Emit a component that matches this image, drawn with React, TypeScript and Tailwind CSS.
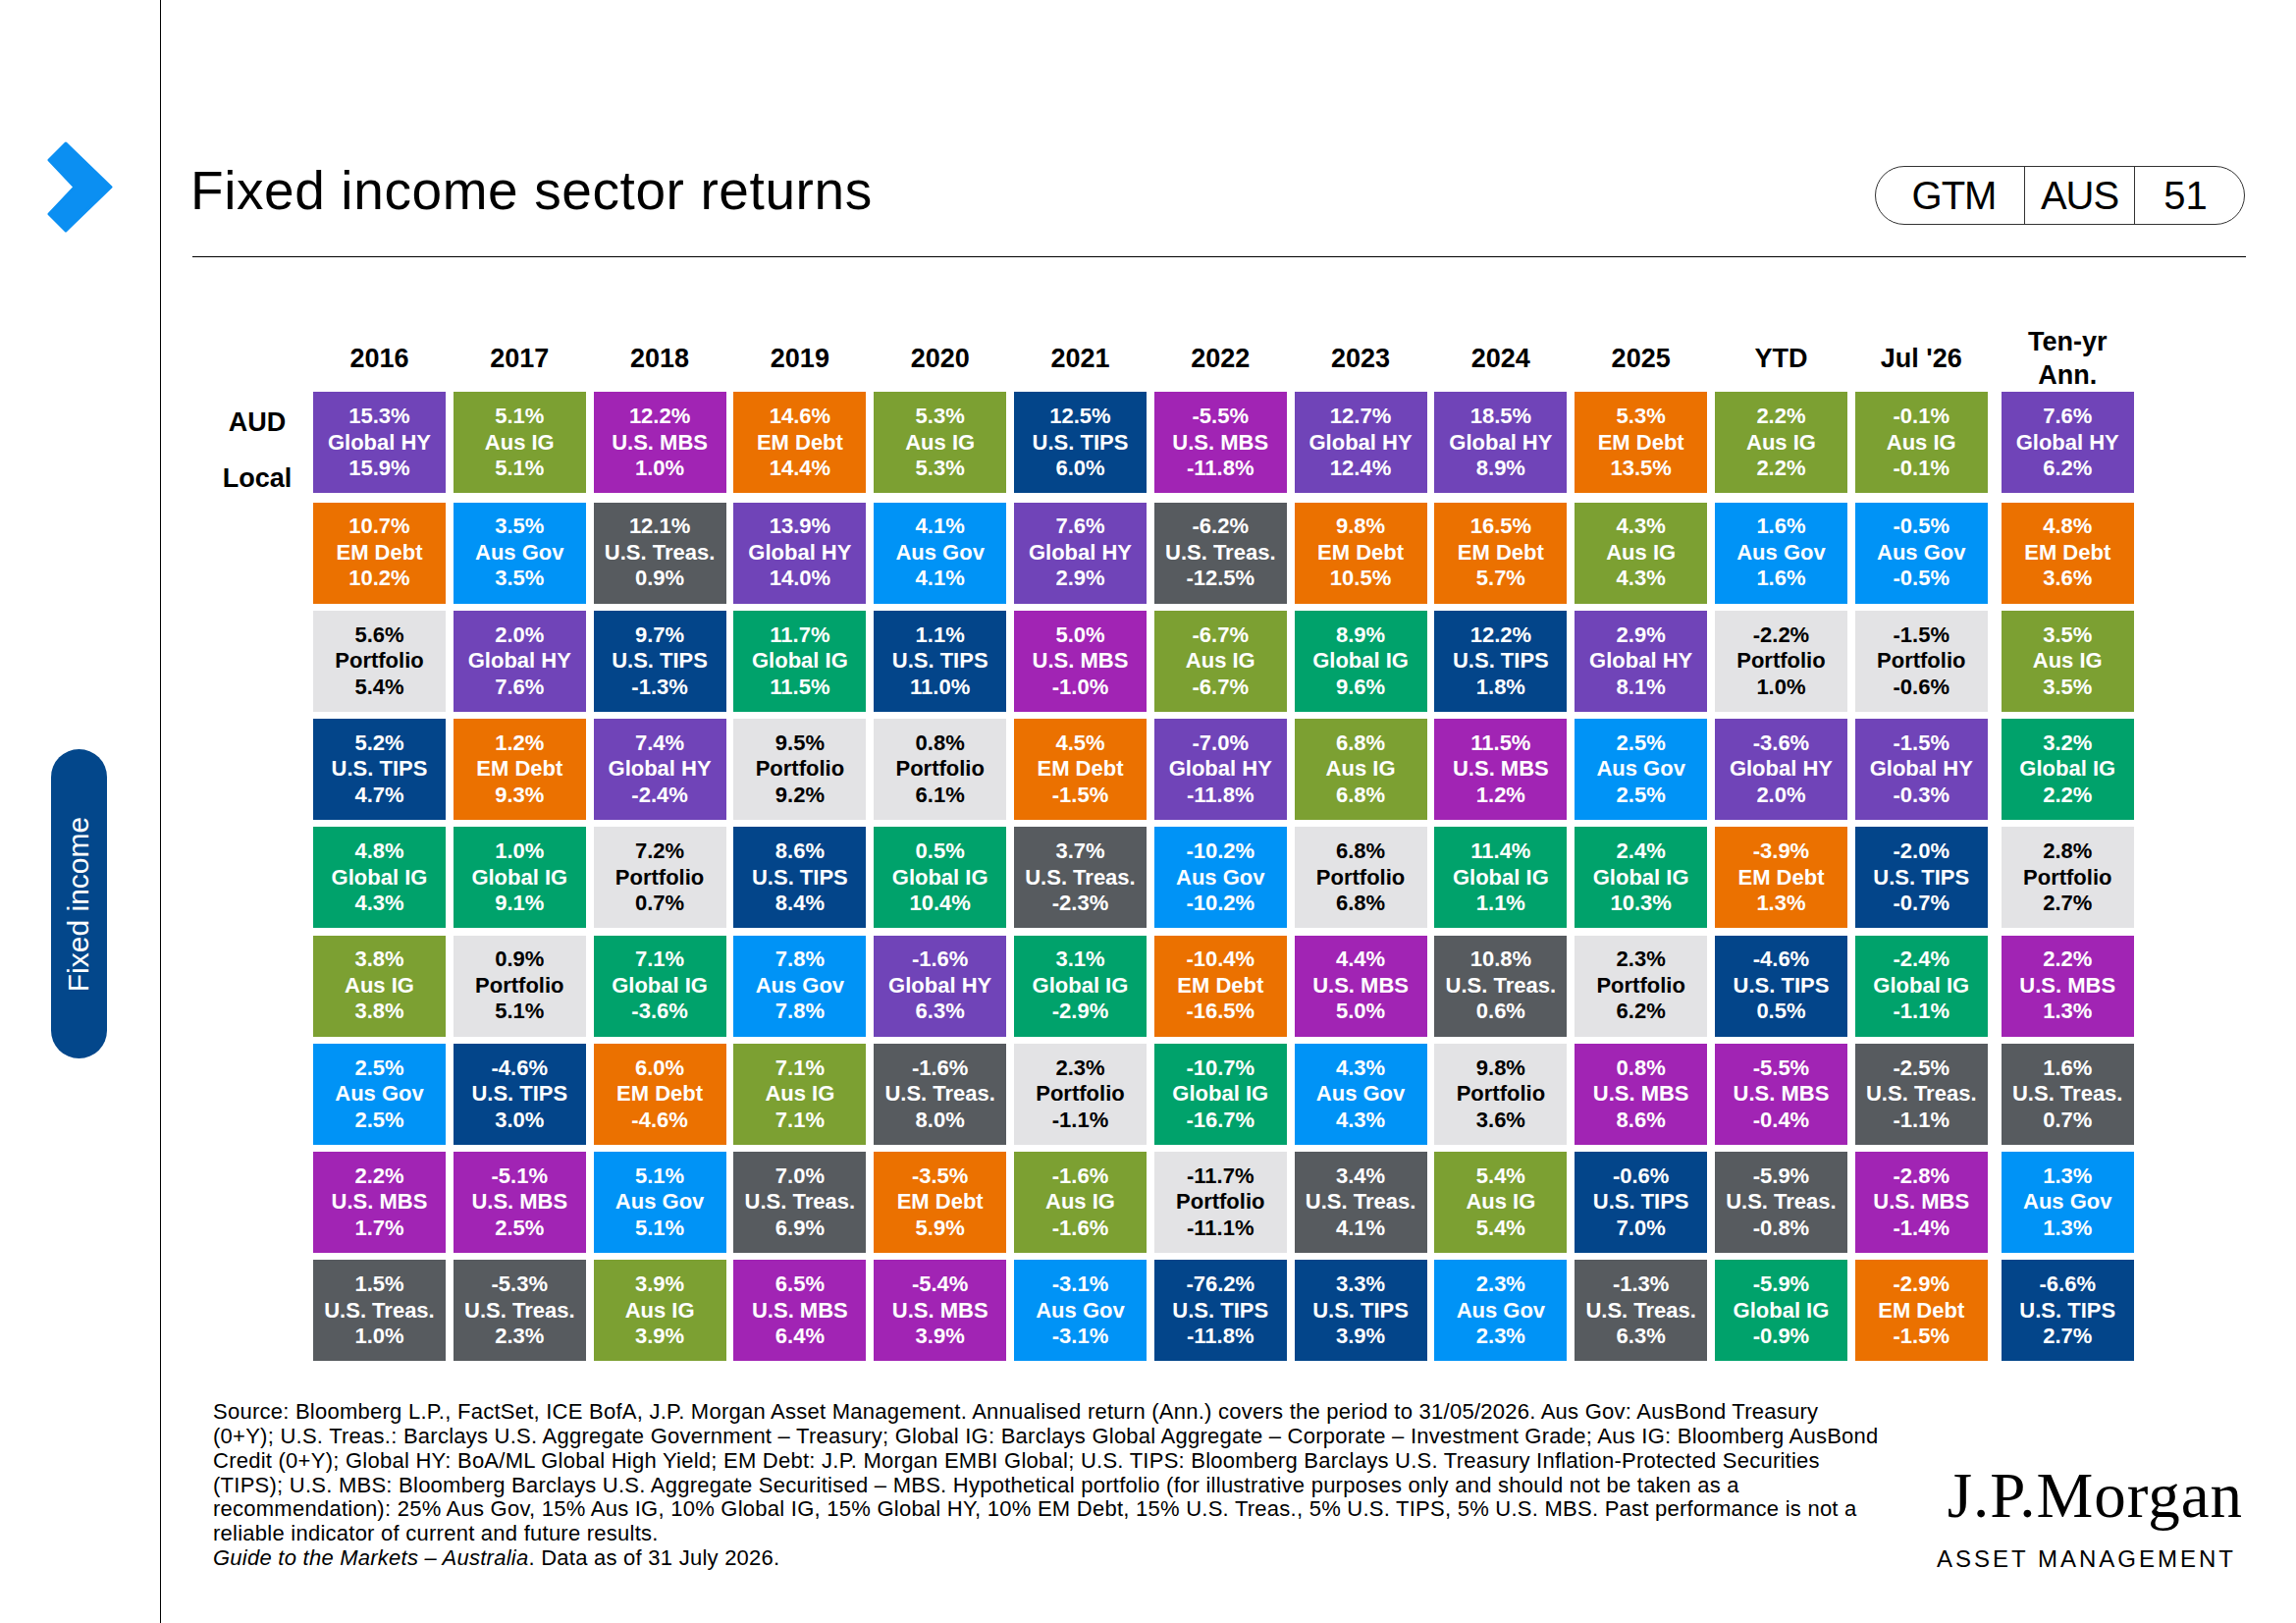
import React from 'react'

const HEADERS = ['2016', '2017', '2018', '2019', '2020', '2021', '2022', '2023', '2024', '2025', 'YTD', "Jul '26"]

const SECTOR_BG: Record<string, string> = {
  'Global HY': 'bg-[#7044b8] text-white',
  'Aus IG': 'bg-[#7ca032] text-white',
  'U.S. MBS': 'bg-[#a124b4] text-white',
  'EM Debt': 'bg-[#eb7100] text-white',
  'Aus Gov': 'bg-[#0093f6] text-white',
  'U.S. Treas.': 'bg-[#575b5f] text-white',
  'Portfolio': 'bg-[#e3e3e5] text-black',
  'U.S. TIPS': 'bg-[#03458a] text-white',
  'Global IG': 'bg-[#00a26b] text-white',
}

// each cell: AUD return | sector | local return
const ROWS: string[][] = [
  ['15.3%|Global HY|15.9%', '5.1%|Aus IG|5.1%', '12.2%|U.S. MBS|1.0%', '14.6%|EM Debt|14.4%', '5.3%|Aus IG|5.3%', '12.5%|U.S. TIPS|6.0%', '-5.5%|U.S. MBS|-11.8%', '12.7%|Global HY|12.4%', '18.5%|Global HY|8.9%', '5.3%|EM Debt|13.5%', '2.2%|Aus IG|2.2%', '-0.1%|Aus IG|-0.1%', '7.6%|Global HY|6.2%'],
  ['10.7%|EM Debt|10.2%', '3.5%|Aus Gov|3.5%', '12.1%|U.S. Treas.|0.9%', '13.9%|Global HY|14.0%', '4.1%|Aus Gov|4.1%', '7.6%|Global HY|2.9%', '-6.2%|U.S. Treas.|-12.5%', '9.8%|EM Debt|10.5%', '16.5%|EM Debt|5.7%', '4.3%|Aus IG|4.3%', '1.6%|Aus Gov|1.6%', '-0.5%|Aus Gov|-0.5%', '4.8%|EM Debt|3.6%'],
  ['5.6%|Portfolio|5.4%', '2.0%|Global HY|7.6%', '9.7%|U.S. TIPS|-1.3%', '11.7%|Global IG|11.5%', '1.1%|U.S. TIPS|11.0%', '5.0%|U.S. MBS|-1.0%', '-6.7%|Aus IG|-6.7%', '8.9%|Global IG|9.6%', '12.2%|U.S. TIPS|1.8%', '2.9%|Global HY|8.1%', '-2.2%|Portfolio|1.0%', '-1.5%|Portfolio|-0.6%', '3.5%|Aus IG|3.5%'],
  ['5.2%|U.S. TIPS|4.7%', '1.2%|EM Debt|9.3%', '7.4%|Global HY|-2.4%', '9.5%|Portfolio|9.2%', '0.8%|Portfolio|6.1%', '4.5%|EM Debt|-1.5%', '-7.0%|Global HY|-11.8%', '6.8%|Aus IG|6.8%', '11.5%|U.S. MBS|1.2%', '2.5%|Aus Gov|2.5%', '-3.6%|Global HY|2.0%', '-1.5%|Global HY|-0.3%', '3.2%|Global IG|2.2%'],
  ['4.8%|Global IG|4.3%', '1.0%|Global IG|9.1%', '7.2%|Portfolio|0.7%', '8.6%|U.S. TIPS|8.4%', '0.5%|Global IG|10.4%', '3.7%|U.S. Treas.|-2.3%', '-10.2%|Aus Gov|-10.2%', '6.8%|Portfolio|6.8%', '11.4%|Global IG|1.1%', '2.4%|Global IG|10.3%', '-3.9%|EM Debt|1.3%', '-2.0%|U.S. TIPS|-0.7%', '2.8%|Portfolio|2.7%'],
  ['3.8%|Aus IG|3.8%', '0.9%|Portfolio|5.1%', '7.1%|Global IG|-3.6%', '7.8%|Aus Gov|7.8%', '-1.6%|Global HY|6.3%', '3.1%|Global IG|-2.9%', '-10.4%|EM Debt|-16.5%', '4.4%|U.S. MBS|5.0%', '10.8%|U.S. Treas.|0.6%', '2.3%|Portfolio|6.2%', '-4.6%|U.S. TIPS|0.5%', '-2.4%|Global IG|-1.1%', '2.2%|U.S. MBS|1.3%'],
  ['2.5%|Aus Gov|2.5%', '-4.6%|U.S. TIPS|3.0%', '6.0%|EM Debt|-4.6%', '7.1%|Aus IG|7.1%', '-1.6%|U.S. Treas.|8.0%', '2.3%|Portfolio|-1.1%', '-10.7%|Global IG|-16.7%', '4.3%|Aus Gov|4.3%', '9.8%|Portfolio|3.6%', '0.8%|U.S. MBS|8.6%', '-5.5%|U.S. MBS|-0.4%', '-2.5%|U.S. Treas.|-1.1%', '1.6%|U.S. Treas.|0.7%'],
  ['2.2%|U.S. MBS|1.7%', '-5.1%|U.S. MBS|2.5%', '5.1%|Aus Gov|5.1%', '7.0%|U.S. Treas.|6.9%', '-3.5%|EM Debt|5.9%', '-1.6%|Aus IG|-1.6%', '-11.7%|Portfolio|-11.1%', '3.4%|U.S. Treas.|4.1%', '5.4%|Aus IG|5.4%', '-0.6%|U.S. TIPS|7.0%', '-5.9%|U.S. Treas.|-0.8%', '-2.8%|U.S. MBS|-1.4%', '1.3%|Aus Gov|1.3%'],
  ['1.5%|U.S. Treas.|1.0%', '-5.3%|U.S. Treas.|2.3%', '3.9%|Aus IG|3.9%', '6.5%|U.S. MBS|6.4%', '-5.4%|U.S. MBS|3.9%', '-3.1%|Aus Gov|-3.1%', '-76.2%|U.S. TIPS|-11.8%', '3.3%|U.S. TIPS|3.9%', '2.3%|Aus Gov|2.3%', '-1.3%|U.S. Treas.|6.3%', '-5.9%|Global IG|-0.9%', '-2.9%|EM Debt|-1.5%', '-6.6%|U.S. TIPS|2.7%'],
]

const FOOTNOTE = [
  'Source: Bloomberg L.P., FactSet, ICE BofA, J.P. Morgan Asset Management. Annualised return (Ann.) covers the period to 31/05/2026. Aus Gov: AusBond Treasury',
  '(0+Y); U.S. Treas.: Barclays U.S. Aggregate Government – Treasury; Global IG: Barclays Global Aggregate – Corporate – Investment Grade; Aus IG: Bloomberg AusBond',
  'Credit (0+Y); Global HY: BoA/ML Global High Yield; EM Debt: J.P. Morgan EMBI Global; U.S. TIPS: Bloomberg Barclays U.S. Treasury Inflation-Protected Securities',
  '(TIPS); U.S. MBS: Bloomberg Barclays U.S. Aggregate Securitised – MBS. Hypothetical portfolio (for illustrative purposes only and should not be taken as a',
  'recommendation): 25% Aus Gov, 15% Aus IG, 10% Global IG, 15% Global HY, 10% EM Debt, 15% U.S. Treas., 5% U.S. TIPS, 5% U.S. MBS. Past performance is not a',
  'reliable indicator of current and future results.',
]

function Chevron() {
  return (
    <svg width="67" height="93" viewBox="0 0 67 93">
      <path
        d="M19 2 L65 46.5 L19 91 L2 74 L28 46.5 L2 19 Z"
        fill="#0b8ff2"
        stroke="#0b8ff2"
        strokeWidth="3"
        strokeLinejoin="round"
      />
    </svg>
  )
}

function Cell({ value, className = '' }: { value: string; className?: string }) {
  const [top, sector, bottom] = value.split('|')
  return (
    <div className={`w-[135px] h-[103px] shrink-0 flex flex-col items-center justify-center text-[22px] font-bold leading-[26.5px] ${SECTOR_BG[sector]} ${className}`}>
      <span>{top}</span>
      <span className="whitespace-nowrap">{sector}</span>
      <span>{bottom}</span>
    </div>
  )
}

export default function App() {
  return (
    <div className="flex w-[2339px] h-[1653px] overflow-hidden bg-white text-black font-['Liberation_Sans',Arial,sans-serif]">
      {/* left rail */}
      <aside className="w-[164px] shrink-0 border-r-[1.5px] border-black flex flex-col">
        <div className="pt-[144px] pl-[48px]">
          <Chevron />
        </div>
        <div className="mt-[526px] ml-[52px] w-[57px] h-[315px] rounded-full bg-[#03478b] flex items-center justify-center">
          <span className="-rotate-90 whitespace-nowrap text-white text-[30px] leading-none">Fixed income</span>
        </div>
      </aside>

      <main className="flex-1 pl-[32px] pr-[51px] flex flex-col">
        {/* title bar */}
        <header className="mt-[168px] h-[94px] border-b-[1.5px] border-black flex items-start justify-between">
          <h1 className="text-[55px] leading-[53px] font-normal tracking-[0.6px] -ml-[2px]">Fixed income sector returns</h1>
          <div className="mt-[1px] mr-[1px] h-[60px] flex border-[1.5px] border-[#333] rounded-full text-[40px] leading-none">
            <span className="w-[151px] flex items-center justify-center pl-[8px] tracking-[-1px]">GTM</span>
            <span className="w-[112px] flex items-center justify-center border-l-[1.5px] border-[#333] tracking-[-1px]">AUS</span>
            <span className="w-[112px] flex items-center justify-center border-l-[1.5px] border-[#333] pr-[8px]">51</span>
          </div>
        </header>

        {/* returns grid */}
        <section className="mt-[73px] flex flex-col gap-y-[7.25px]">
          <div className="flex h-[60px] items-center gap-x-[7.8px] text-[27px] font-bold leading-[34px] -mb-[3px]">
            <div className="w-[115.2px] shrink-0" />
            {HEADERS.map(h => (
              <div key={h} className="w-[135px] shrink-0 text-center">{h}</div>
            ))}
            <div className="w-[135px] shrink-0 ml-[6.2px] text-center">Ten-yr<br />Ann.</div>
          </div>
          {ROWS.map((row, i) => (
            <div key={i} className="flex gap-x-[7.8px]">
              <div className="w-[115.2px] shrink-0 pl-[17px]">
                {i === 0 && (
                  <div className="flex flex-col items-center pt-[14px] gap-y-[23px] text-[27px] font-bold leading-[34px]">
                    <span>AUD</span>
                    <span>Local</span>
                  </div>
                )}
              </div>
              {row.slice(0, 12).map((c, j) => (
                <Cell key={j} value={c} />
              ))}
              <Cell value={row[12]} className="ml-[6.2px]" />
            </div>
          ))}
        </section>

        {/* footnote + logo */}
        <footer className="mt-[40px] flex items-start justify-between">
          <div className="ml-[21px] text-[22px] leading-[24.75px] tracking-[0.25px] whitespace-nowrap">
            {FOOTNOTE.map(l => (
              <div key={l}>{l}</div>
            ))}
            <div><i>Guide to the Markets – Australia</i>. Data as of 31 July 2026.</div>
          </div>
          <div className="mt-[65px] mr-[3px] flex flex-col items-end">
            <div className="font-['Liberation_Serif',serif] text-[65px] leading-[65px] tracking-[1px]">J.P.Morgan</div>
            <div className="mt-[20px] mr-[7px] text-[24px] leading-[24px] tracking-[3px]">ASSET MANAGEMENT</div>
          </div>
        </footer>
      </main>
    </div>
  )
}
